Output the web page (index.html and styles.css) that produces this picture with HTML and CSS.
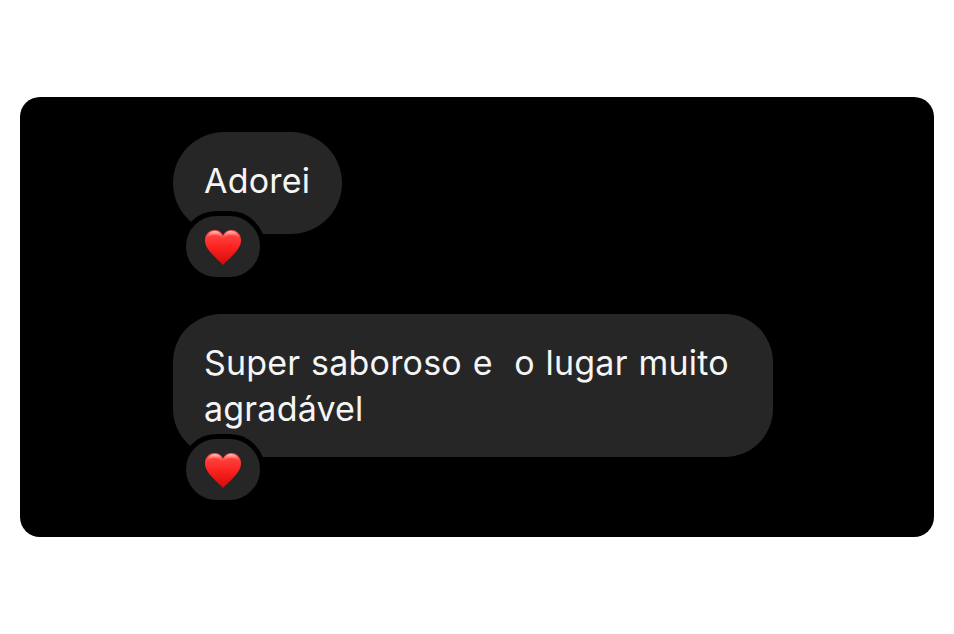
FILE: index.html
```html
<!DOCTYPE html>
<html lang="pt-BR">
  <head>
    <meta charset="UTF-8" />
    <meta name="viewport" content="width=device-width, initial-scale=1.0" />
    <title>Comentários</title>
    <link rel="stylesheet" href="styles.css">
  </head>
  <body>
    <svg class="defs" width="0" height="0" aria-hidden="true">
      <defs>
        <linearGradient id="heart-fill" x1="0" y1="0" x2="0" y2="1">
          <stop offset="0" stop-color="#ff4f4b" />
          <stop offset="0.5" stop-color="#fb2320" />
          <stop offset="1" stop-color="#d20a0a" />
        </linearGradient>
        <linearGradient id="heart-shine" x1="0" y1="0" x2="0" y2="1">
          <stop offset="0" stop-color="#ffd2ce" stop-opacity="0.95" />
          <stop offset="1" stop-color="#ff5a56" stop-opacity="0" />
        </linearGradient>
        <symbol id="heart" viewBox="0 0 36 35">
          <path fill="url(#heart-fill)" d="M18 35C16.500 33 12 29.500 7.500 24.500C3 19.500 0 15.500 0 10.200C0 4.300 4.200 0 9.600 0C13.200 0 16.200 1.900 18 5.200C19.800 1.900 22.800 0 26.400 0C31.800 0 36 4.300 36 10.200C36 15.500 33 19.500 28.500 24.500C24 29.500 19.500 33 18 35Z" />
          <path fill="url(#heart-shine)" d="M9.800 1C5.600 1 2.200 4 1.600 8.500C4 5.800 7 4.800 10 5C13 5.200 16 6.500 18 9C20 6.500 23 5.200 26 5C29 4.800 32 5.800 34.400 8.500C33.800 4 30.400 1 26.200 1C22.800 1 19.800 3 18 6.800C16.200 3 13.200 1 9.800 1Z" />
        </symbol>
      </defs>
    </svg>

    <div class="card">
      <div class="comment comment-short">
        <p class="bubble">Adorei</p>
        <div class="reaction">
          <svg class="heart" width="36" height="35"><use href="#heart" /></svg>
        </div>
      </div>

      <div class="comment comment-long">
        <p class="bubble">Super saboroso e&nbsp; o lugar muito agradável</p>
        <div class="reaction">
          <svg class="heart" width="36" height="35"><use href="#heart" /></svg>
        </div>
      </div>
    </div>
  </body>
</html>
```

FILE: styles.css
```css
:root {
  --background: #ffffff;
  --card: #000000;
  --bubble: #262626;
  --text: #f5f5f5;
}

* {
  margin: 0;
  padding: 0;
  box-sizing: border-box;
}

body {
  background-color: var(--background);
  font-family: "Inter", "Liberation Sans", sans-serif;
  min-height: 100vh;
  display: flex;
  align-items: center;
  padding: 0 20px;
}

.defs {
  position: absolute;
}

.card {
  background-color: var(--card);
  border-radius: 20px;
  width: 100%;
  height: 440px;
  padding: 35px 0 0 153px;
  display: flex;
  flex-direction: column;
  gap: 80px;
}

.comment {
  position: relative;
}

.bubble {
  background-color: var(--bubble);
  color: var(--text);
  font-size: 34px;
  letter-spacing: 0.2px;
  word-spacing: 1px;
  line-height: 46px;
  padding: 26px 31px 25px;
}

.comment-short .bubble {
  width: 169px;
  height: 102px;
  border-radius: 51px;
}

.comment-long .bubble {
  width: 600px;
  border-radius: 48px;
}

/* round badge cut out of the bubble by its black ring */
.reaction {
  position: absolute;
  left: 8px;
  bottom: -48px;
  width: 84px;
  height: 71px;
  padding-top: 2px;
  background-color: var(--bubble);
  border: 5px solid var(--card);
  border-radius: 36px;
  display: flex;
  align-items: center;
  justify-content: center;
}
```
